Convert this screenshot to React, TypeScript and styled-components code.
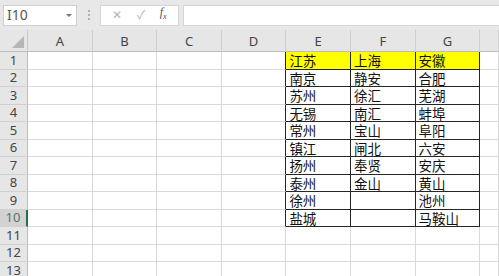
import React from "react";
import styled, { createGlobalStyle } from "styled-components";

const GlobalStyle = createGlobalStyle`
  html, body { margin: 0; padding: 0; background: #fff; overflow: hidden; }
  body { font-family: "Noto Sans", "Noto Sans CJK SC", sans-serif; }
`;

const Page = styled.div`
  width: 499px;
  height: 276px;
  overflow: hidden;
  display: flex;
  flex-direction: column;
  background: #fff;
`;

const Toolbar = styled.div`
  height: 30px;
  flex: none;
  display: flex;
  align-items: center;
  padding: 0 0 0 3px;
  background: #e8e8e8;
  box-sizing: border-box;
`;

const NameBox = styled.div`
  width: 74px;
  height: 21px;
  box-sizing: border-box;
  background: #fff;
  border: 1px solid #d0d0d0;
  display: flex;
  align-items: center;
  justify-content: space-between;
  padding: 0 4px 0 3px;
  font-size: 14px;
  line-height: 16px;
  color: #555;
`;

const Caret = styled.span`
  width: 0;
  height: 0;
  border-left: 3px solid transparent;
  border-right: 3px solid transparent;
  border-top: 3px solid #777;
`;

const Dots = styled.div`
  width: 23px;
  display: flex;
  flex-direction: column;
  align-items: center;
  gap: 2px;
  span {
    width: 2px;
    height: 2px;
    background: #b0b0b0;
  }
`;

const FxBox = styled.div`
  width: 79px;
  height: 21px;
  box-sizing: border-box;
  background: #fff;
  border: 1px solid #d6d6d6;
  display: flex;
  align-items: center;
  justify-content: space-around;
  padding: 0 4px;
  color: #b4b4b4;
  font-size: 12px;
  line-height: 14px;
`;

const FxText = styled.span`
  font-family: "Liberation Serif", serif;
  font-style: italic;
  font-size: 12px;
  color: #555;
  sub { font-size: 8px; }
`;

const FormulaInput = styled.div`
  flex: 1;
  height: 21px;
  margin-left: 4px;
  background: #fff;
  border: 1px solid #d6d6d6;
  border-right: none;
  box-sizing: border-box;
`;

const Sheet = styled.div`
  flex: 1;
  display: grid;
  grid-template-columns: 28px repeat(7, 64.6px) 1fr;
  grid-template-rows: 22px repeat(13, 17.5px);
  font-family: "Noto Sans CJK SC", sans-serif;
`;

const Corner = styled.div`
  background: #e6e6e6;
  border-right: 1px solid #c8c8c8;
  border-bottom: 1px solid #bdbdbd;
  position: relative;
  &::after {
    content: "";
    position: absolute;
    right: 3px;
    bottom: 3px;
    width: 0;
    height: 0;
    border-left: 12px solid transparent;
    border-bottom: 12px solid #b5b5b5;
  }
`;

const ColHead = styled.div`
  background: #e6e6e6;
  border-right: 1px solid #cfcfcf;
  border-bottom: 1px solid #bdbdbd;
  display: flex;
  align-items: center;
  justify-content: center;
  font-family: "Noto Sans", sans-serif;
  font-size: 13px;
  line-height: 15px;
  color: #444;
  padding-top: 2px;
  box-sizing: border-box;
`;

const RowHead = styled.div<{ $active?: boolean }>`
  background: ${(p) => (p.$active ? "#d2d2d2" : "#e6e6e6")};
  border-right: ${(p) => (p.$active ? "2px solid #217346" : "1px solid #bdbdbd")};
  border-bottom: 1px solid #d0d0d0;
  display: flex;
  align-items: center;
  justify-content: center;
  font-family: "Noto Sans", sans-serif;
  font-size: 13px;
  line-height: 15px;
  color: ${(p) => (p.$active ? "#53755f" : "#444")};
  box-sizing: border-box;
`;

const Cell = styled.div<{ $boxed?: boolean; $edge?: boolean; $fill?: string }>`
  background: ${(p) => p.$fill || "#fff"};
  border-right: 1px solid ${(p) => (p.$boxed || p.$edge ? "#262626" : "#d9d9d9")};
  border-bottom: 1px solid ${(p) => (p.$boxed ? "#262626" : "#d9d9d9")};
  box-sizing: border-box;
  display: flex;
  align-items: center;
  padding: 1px 0 0 3px;
  font-size: 13.5px;
  line-height: 15px;
  color: #111;
  white-space: nowrap;
`;

const columns = ["A", "B", "C", "D", "E", "F", "G", ""];

const data: string[][] = [
  ["江苏", "上海", "安徽"],
  ["南京", "静安", "合肥"],
  ["苏州", "徐汇", "芜湖"],
  ["无锡", "南汇", "蚌埠"],
  ["常州", "宝山", "阜阳"],
  ["镇江", "闸北", "六安"],
  ["扬州", "奉贤", "安庆"],
  ["泰州", "金山", "黄山"],
  ["徐州", "", "池州"],
  ["盐城", "", "马鞍山"],
];

export default function App() {
  const rows = Array.from({ length: 13 }, (_, i) => i + 1);
  return (
    <>
      <GlobalStyle />
      <Page>
        <Toolbar>
          <NameBox>
            I10
            <Caret />
          </NameBox>
          <Dots>
            <span />
            <span />
            <span />
          </Dots>
          <FxBox>
            <span>✕</span>
            <span>✓</span>
            <FxText>
              f<sub>x</sub>
            </FxText>
          </FxBox>
          <FormulaInput />
        </Toolbar>
        <Sheet>
          <Corner />
          {columns.map((c, i) => (
            <ColHead key={i}>{c}</ColHead>
          ))}
          {rows.map((r) => {
            const inTable = r <= data.length;
            return (
              <React.Fragment key={r}>
                <RowHead $active={r === 10}>{r}</RowHead>
                {columns.map((_, ci) => {
                  const boxed = inTable && ci >= 4 && ci <= 6;
                  const edge = inTable && ci === 3;
                  const text = boxed ? data[r - 1][ci - 4] : "";
                  return (
                    <Cell
                      key={ci}
                      $boxed={boxed}
                      $edge={edge}
                      $fill={boxed && r === 1 ? "#ffff00" : undefined}
                    >
                      {text}
                    </Cell>
                  );
                })}
              </React.Fragment>
            );
          })}
        </Sheet>
      </Page>
    </>
  );
}
